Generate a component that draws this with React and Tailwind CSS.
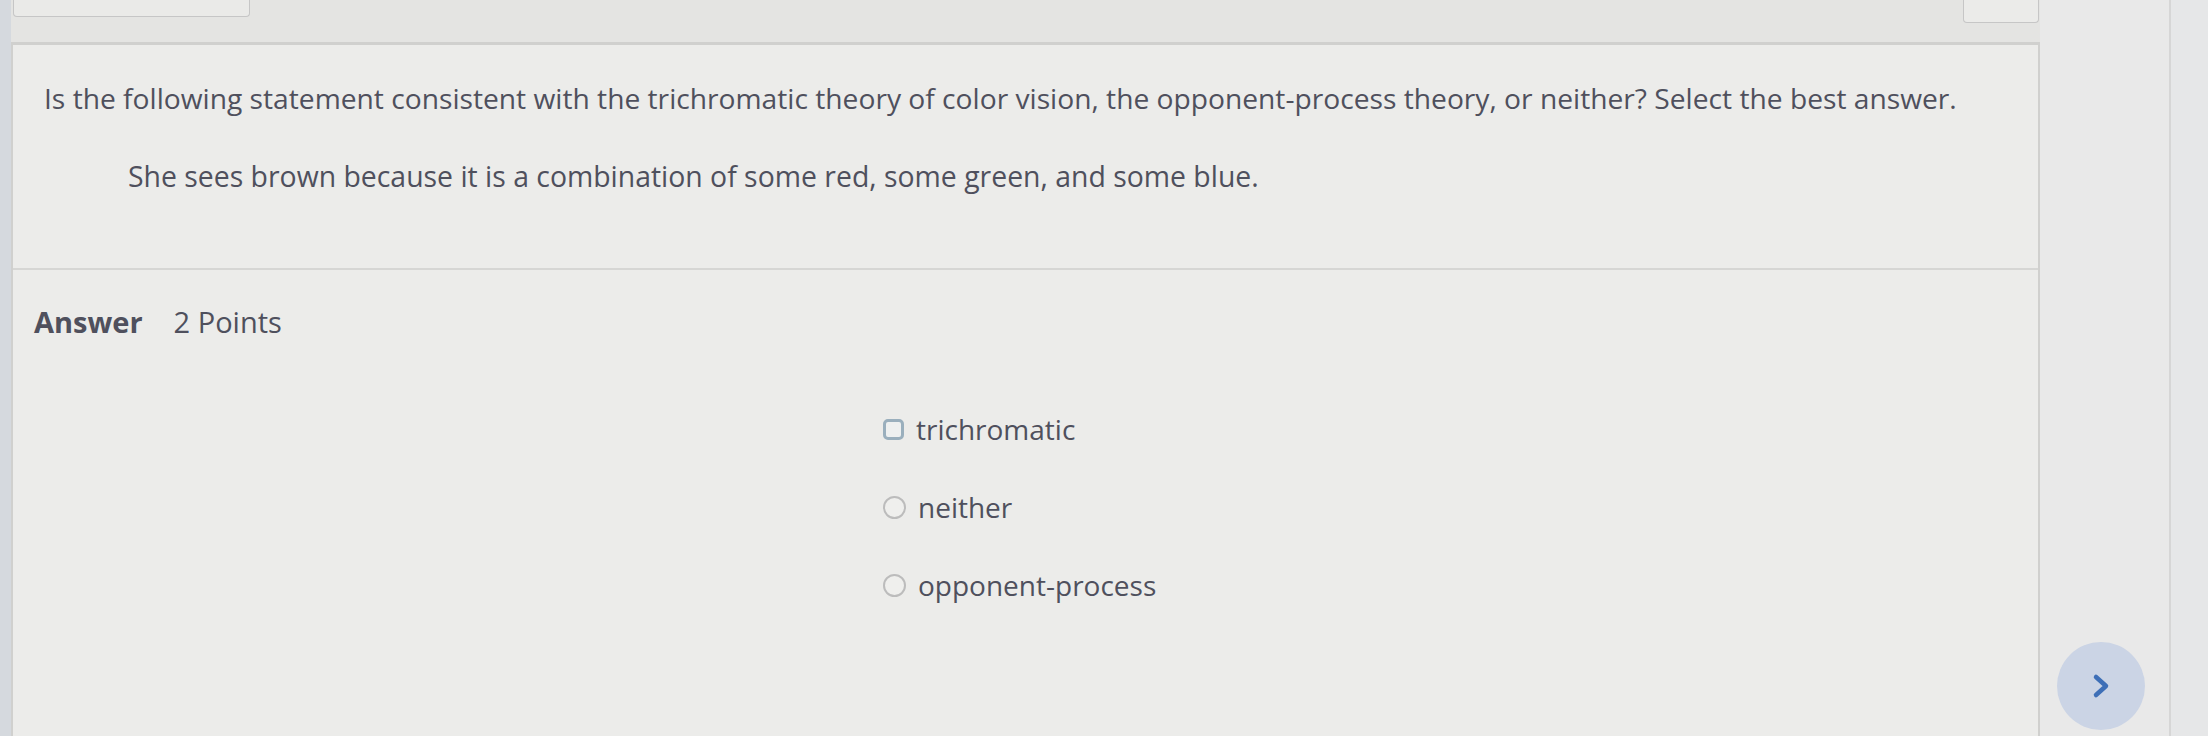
const options = [
  { label: 'trichromatic', kind: 'square' },
  { label: 'neither', kind: 'circle' },
  { label: 'opponent-process', kind: 'circle' },
];

const OptionMark = ({ kind }) =>
  kind === 'square' ? (
    <span className="block w-[21px] h-[21px] rounded-[5px] border-[3px] border-[#9aafbd] bg-[#eef0f0]" />
  ) : (
    <span className="block w-[23px] h-[23px] rounded-full border-2 border-[#bcbcbc] bg-[#efefed]" />
  );

const App = () => {
  return (
    <div
      className="flex w-[2208px] h-[736px] overflow-hidden bg-[#e4e4e2] text-[#4f505d]"
      style={{ fontFamily: '"Open Sans", "Noto Sans", Arial, sans-serif' }}
    >
      {/* left edge */}
      <div className="w-[11px] shrink-0 bg-[#d5d9de]" />

      {/* main column */}
      <div className="w-[2029px] shrink-0 flex flex-col">
        {/* top band */}
        <div className="h-[42px] shrink-0 flex justify-between items-start pl-[2px] pr-[1px]">
          <div className="w-[237px] h-[17px] border border-t-0 border-[#c6c6c6] rounded-b-[4px] bg-[#eaeae8]" />
          <div className="w-[76px] h-[23px] border border-t-0 border-[#c6c6c6] rounded-b-[4px] bg-[#ebebe9]" />
        </div>

        {/* card */}
        <div className="flex-1 flex flex-col border-t-[3px] border-l-2 border-r-2 border-[#d0d0ce] bg-[#ececea]">
          {/* question */}
          <div className="h-[225px] shrink-0 border-b-2 border-[#d6d6d4] pl-[31px] pt-[34px]">
            <p className="text-[28.2px] leading-[38px]">
              Is the following statement consistent with the trichromatic theory of color vision, the opponent-process theory, or neither? Select the best answer.
            </p>
            <p className="mt-[40px] pl-[84px] text-[28.4px] leading-[38px]">
              She sees brown because it is a combination of some red, some green, and some blue.
            </p>
          </div>

          {/* answer */}
          <div className="flex-1 pl-[21px] pt-[33px]">
            <div className="flex items-center gap-[31px] text-[29px] leading-[38px]">
              <span className="font-bold">Answer</span>
              <span>2 Points</span>
            </div>

            <div className="mt-[71px] pl-[849px] flex flex-col gap-[44px]">
              {options.map((o) => (
                <div key={o.label} className="flex items-center gap-[12px] text-[28px] leading-[34px]">
                  <OptionMark kind={o.kind} />
                  <span>{o.label}</span>
                </div>
              ))}
            </div>
          </div>
        </div>
      </div>

      {/* right sidebar */}
      <div className="w-[131px] shrink-0 flex flex-col justify-end items-center pb-[6px] pr-[8px] border-r-2 border-[#d6d6d6] bg-[#e9e9e9]">
        <button className="w-[88px] h-[88px] rounded-full bg-[#cbd4e5] flex items-center justify-center">
          <svg width="22" height="26" viewBox="0 0 22 26" fill="none">
            <path d="M6 4 L16 13 L6 22" stroke="#3e6fb7" strokeWidth="4.5" strokeLinecap="round" strokeLinejoin="round" />
          </svg>
        </button>
      </div>

      {/* right edge */}
      <div className="flex-1 bg-[#e6e7e8]" />
    </div>
  );
};

export default App;
